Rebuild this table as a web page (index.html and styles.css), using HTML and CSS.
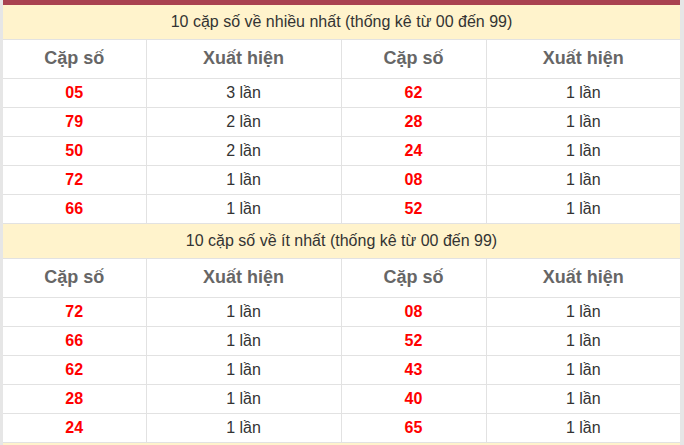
FILE: index.html
```html
<!DOCTYPE html>
<html lang="vi">
<head>
<meta charset="utf-8">
<link rel="stylesheet" href="styles.css">
</head>
<body>
<div class="wrap">
  <div class="topbar"></div>
  <table class="stat">
    <colgroup><col class="c1"><col class="c2"><col class="c3"><col class="c4"></colgroup>
    <tr class="title"><td colspan="4">10 cặp số về nhiều nhất (thống kê từ 00 đến 99)</td></tr>
    <tr class="head"><th>Cặp số</th><th>Xuất hiện</th><th>Cặp số</th><th>Xuất hiện</th></tr>
    <tr><td class="num">05</td><td>3 lần</td><td class="num">62</td><td>1 lần</td></tr>
    <tr><td class="num">79</td><td>2 lần</td><td class="num">28</td><td>1 lần</td></tr>
    <tr><td class="num">50</td><td>2 lần</td><td class="num">24</td><td>1 lần</td></tr>
    <tr><td class="num">72</td><td>1 lần</td><td class="num">08</td><td>1 lần</td></tr>
    <tr><td class="num">66</td><td>1 lần</td><td class="num">52</td><td>1 lần</td></tr>
    <tr class="title second"><td colspan="4">10 cặp số về ít nhất (thống kê từ 00 đến 99)</td></tr>
    <tr class="head"><th>Cặp số</th><th>Xuất hiện</th><th>Cặp số</th><th>Xuất hiện</th></tr>
    <tr><td class="num">72</td><td>1 lần</td><td class="num">08</td><td>1 lần</td></tr>
    <tr><td class="num">66</td><td>1 lần</td><td class="num">52</td><td>1 lần</td></tr>
    <tr><td class="num">62</td><td>1 lần</td><td class="num">43</td><td>1 lần</td></tr>
    <tr><td class="num">28</td><td>1 lần</td><td class="num">40</td><td>1 lần</td></tr>
    <tr><td class="num">24</td><td>1 lần</td><td class="num">65</td><td>1 lần</td></tr>
    <tr class="title"><td colspan="4">&nbsp;</td></tr>
  </table>
</div>
</body>
</html>
```

FILE: styles.css
```css
html, body {
  margin: 0;
  padding: 0;
  background: #e6e6e6;
}
body {
  font-family: "Liberation Sans", Arial, sans-serif;
  color: #333;
}
.wrap {
  margin-left: 3px;
  width: 677px;
  background: #fff;
}
.topbar {
  height: 5px;
  background: #a94250;
}
.stat {
  width: 677px;
  border-collapse: collapse;
  table-layout: fixed;
}
.c1 { width: 143px; }
.c2 { width: 195px; }
.c3 { width: 145px; }
.c4 { width: 194px; }
.stat td, .stat th {
  border: 1px solid #e2e2e2;
  text-align: center;
  padding: 0;
  font-size: 16px;
}
.stat tr { height: 29px; }
.stat tr.title { height: 34px; }
.stat tr.title.second { height: 35px; }
.stat tr.title td {
  background: #fff3cc;
  border-left: none;
  border-right: none;
  border-top: none;
  color: #333;
}
.stat tr.head { height: 39px; }
.stat tr.head th {
  font-size: 18px;
  font-weight: bold;
  color: #666;
  border-top: none;
}
.stat td.num {
  color: #f00;
  font-weight: bold;
}
.stat tr td:first-child, .stat tr th:first-child { border-left: none; }
.stat tr td:last-child, .stat tr th:last-child { border-right: none; }
```
